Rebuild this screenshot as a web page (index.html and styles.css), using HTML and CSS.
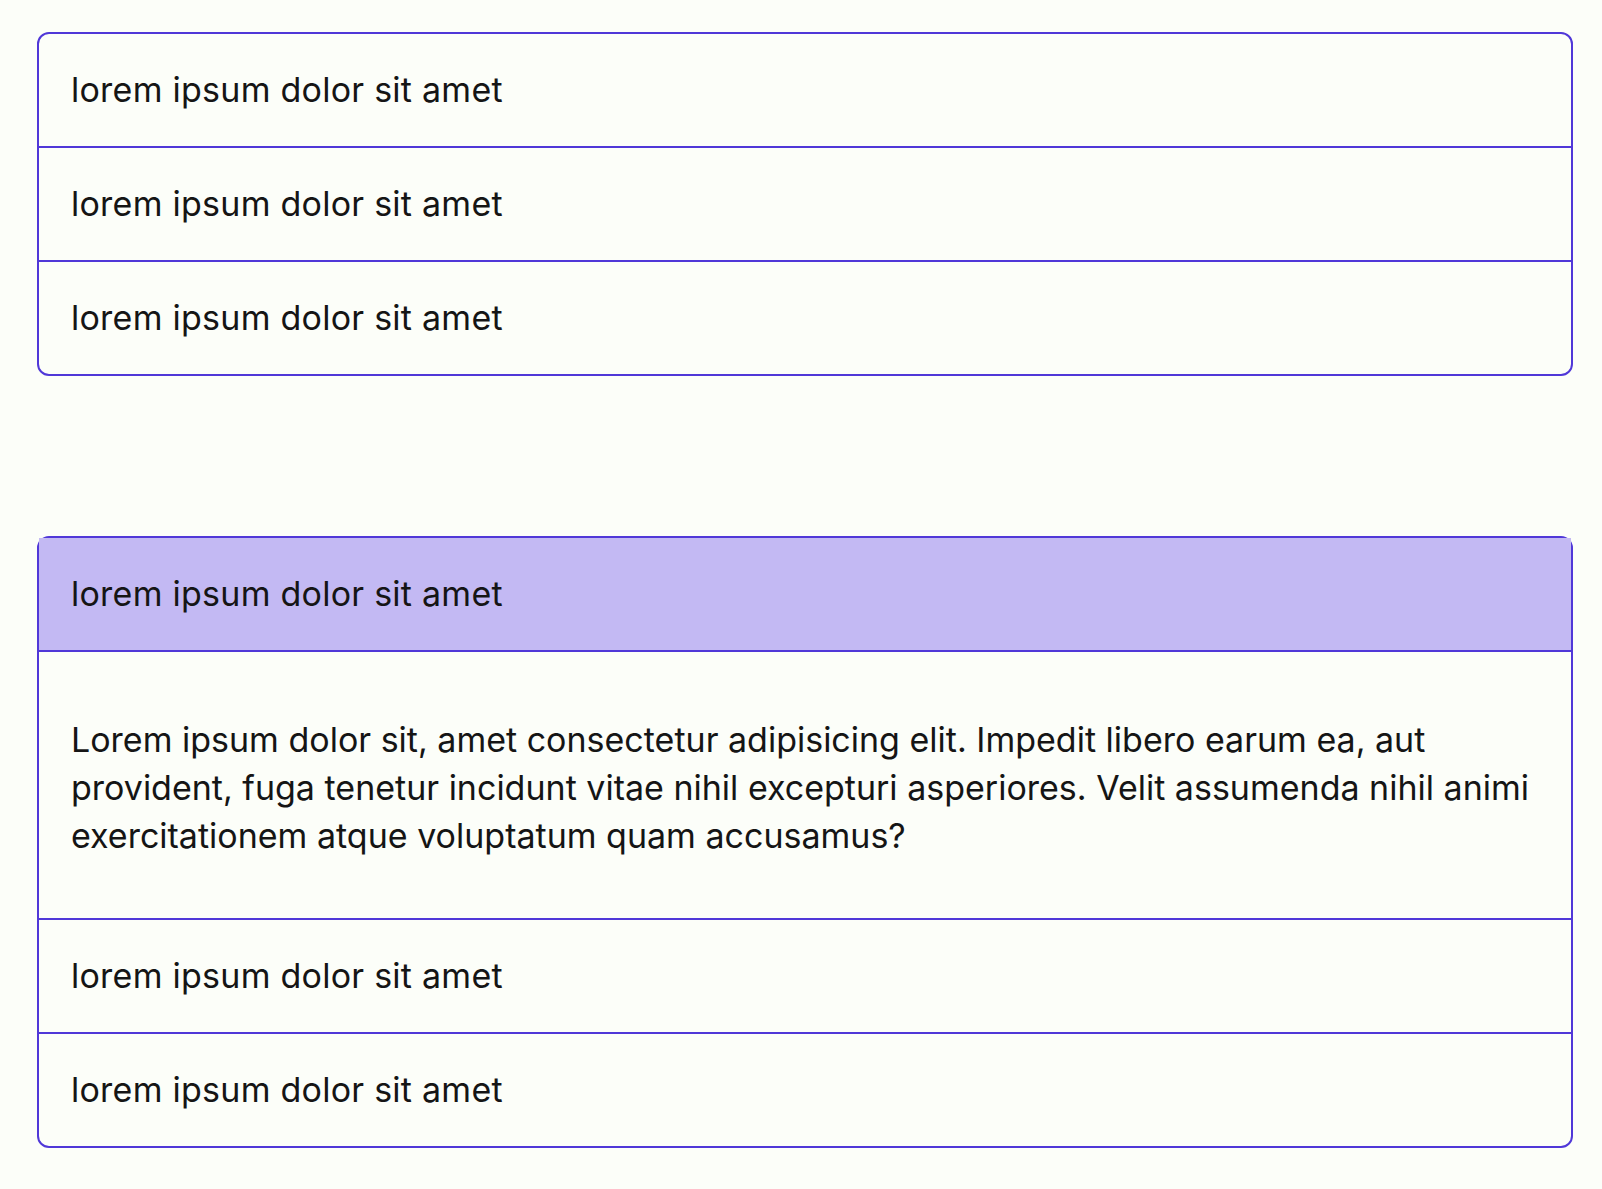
FILE: index.html
```html
<!DOCTYPE html>
<html lang="en">
<head>
<meta charset="utf-8">
<title>Accordion</title>
<link rel="stylesheet" href="styles.css">
</head>
<body>
<main class="page">
  <section class="accordion">
    <div class="item"><div class="item-header">lorem ipsum dolor sit amet</div></div>
    <div class="item"><div class="item-header">lorem ipsum dolor sit amet</div></div>
    <div class="item"><div class="item-header">lorem ipsum dolor sit amet</div></div>
  </section>

  <section class="accordion">
    <div class="item item--open">
      <div class="item-header">lorem ipsum dolor sit amet</div>
      <div class="item-body">
        <p>Lorem ipsum dolor sit, amet consectetur adipisicing elit. Impedit libero earum ea, aut provident, fuga tenetur incidunt vitae nihil excepturi asperiores. Velit assumenda nihil animi exercitationem atque voluptatum quam accusamus?</p>
      </div>
    </div>
    <div class="item"><div class="item-header">lorem ipsum dolor sit amet</div></div>
    <div class="item"><div class="item-header">lorem ipsum dolor sit amet</div></div>
  </section>
</main>
</body>
</html>
```

FILE: styles.css
```css
* {
  box-sizing: border-box;
}

html, body {
  margin: 0;
  background: #fcfef9;
}

body {
  font-family: Inter, "Open Sans", sans-serif;
  color: #151515;
}

.page {
  display: flex;
  flex-direction: column;
  gap: 160px;
  padding: 32px 29px 40px 37px;
}

.accordion {
  border: 2px solid #5038d8;
  border-radius: 12px;
}

.item + .item {
  border-top: 2px solid #5038d8;
}

.item-header {
  padding: 32px;
  font-size: 34px;
  line-height: 48px;
  font-weight: 400;
  letter-spacing: 0.25px;
}

.item--open .item-header {
  background: #c3b9f3;
  border-bottom: 2px solid #5038d8;
}

.item-body {
  padding: 64px 32px 58px;
}

.item-body p {
  margin: 0;
  font-size: 34px;
  line-height: 48px;
}
```
